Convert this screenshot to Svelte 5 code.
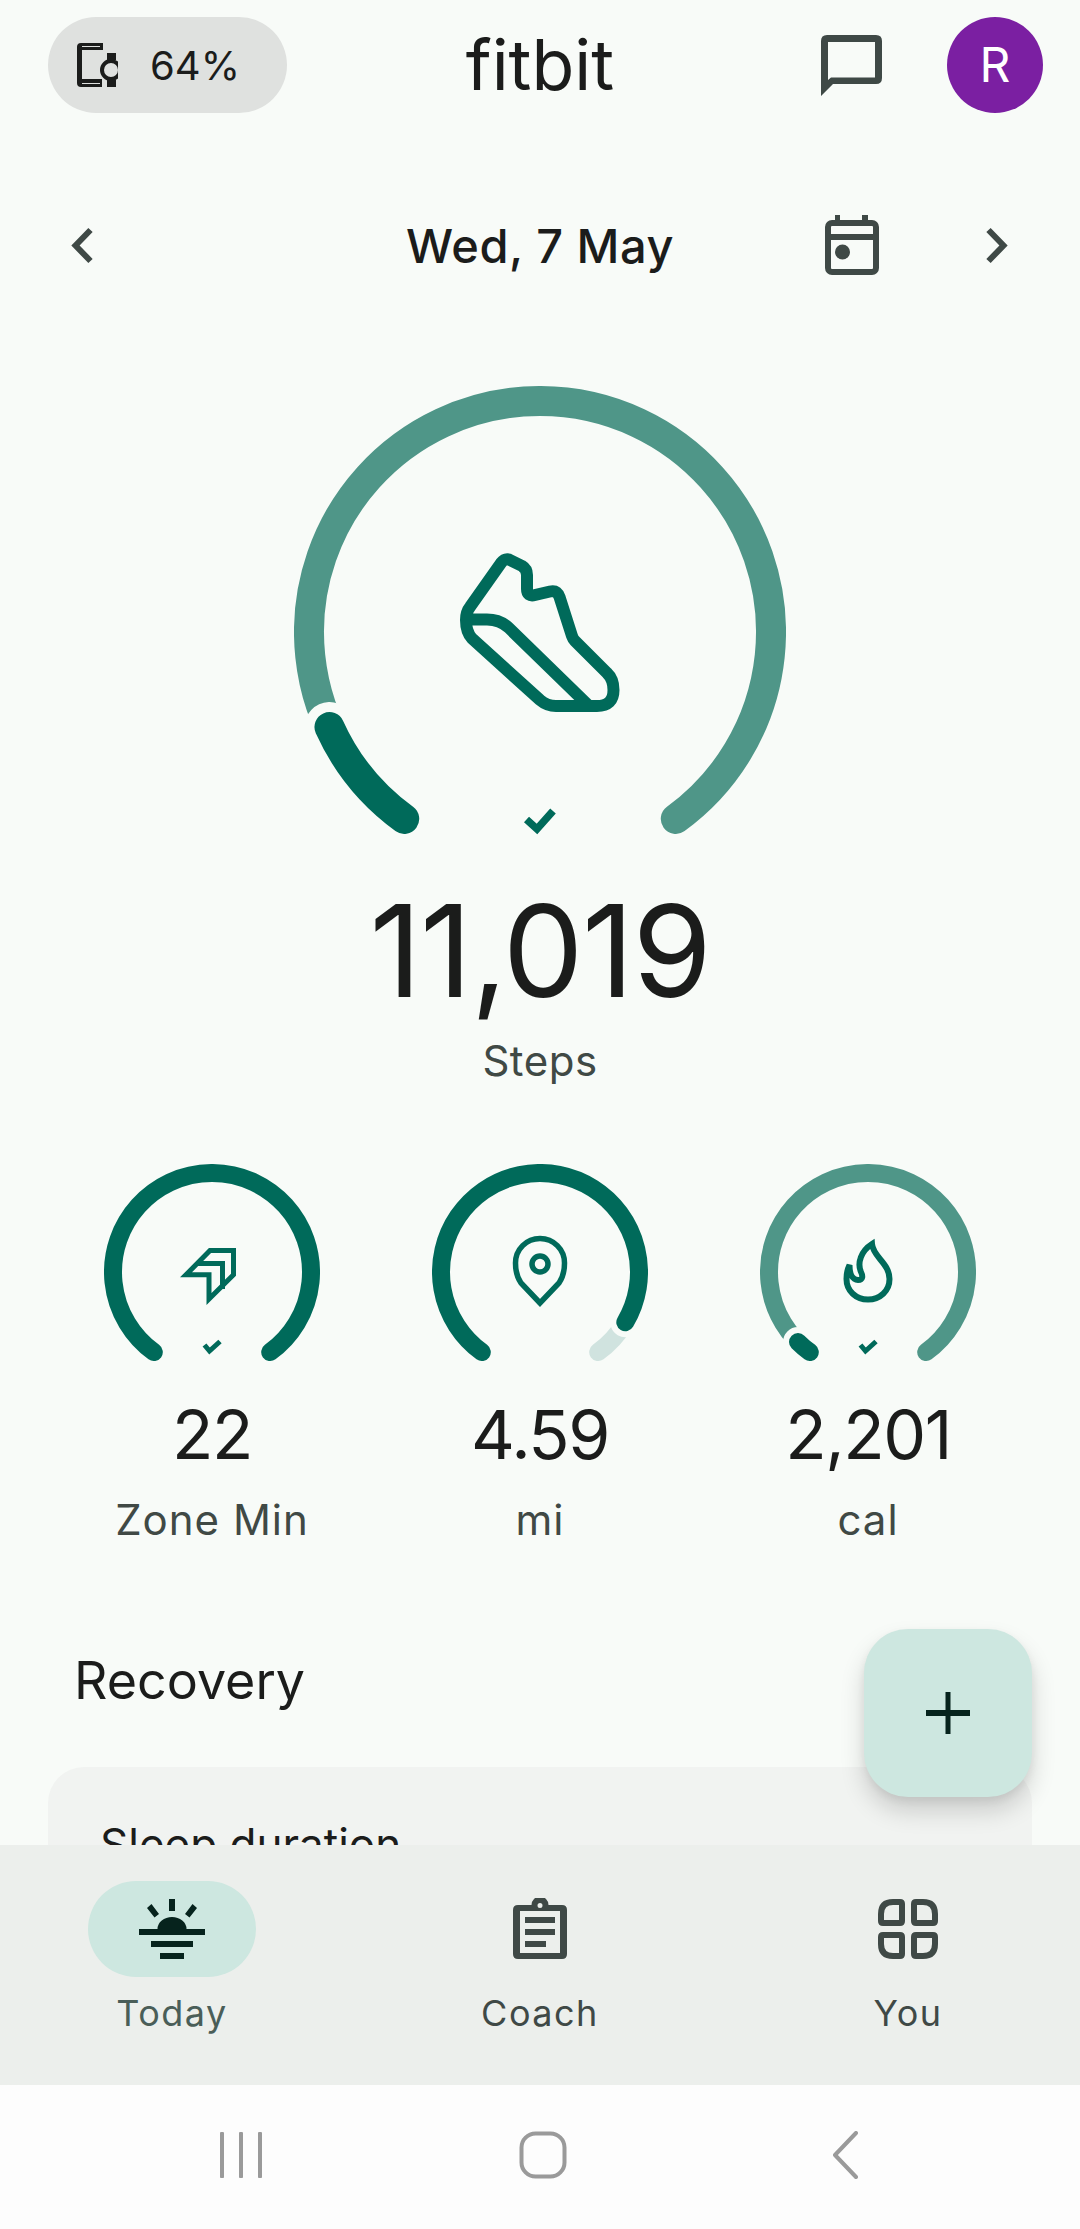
<script>
	const dark = '#006a5a';
	const light = '#4f9688';
	const pale = '#d0e3df';
	const bg = '#f8fbf8';

	// point on a ring; the angle runs clockwise from the bottom
	function arc(cx, cy, r, from, to) {
		const pt = (a) => {
			const t = (a * Math.PI) / 180;
			return `${(cx - r * Math.sin(t)).toFixed(2)} ${(cy + r * Math.cos(t)).toFixed(2)}`;
		};
		const large = to - from > 180 ? 1 : 0;
		return `M${pt(from)} A${r} ${r} 0 ${large} 1 ${pt(to)}`;
	}

	const stats = [
		{ key: 'zone', value: '22', label: 'Zone Min', cx: 212, base: dark, progress: null, done: true },
		{ key: 'pin', value: '4.59', label: 'mi', cx: 540, base: pale, progress: [36, 300.5], done: false },
		{ key: 'flame', value: '2,201', label: 'cal', cx: 868, base: light, progress: [36, 45], done: true }
	];
</script>

<div class="phone">
	<div class="content">
		<header class="topbar">
			<div class="battery">
				<svg class="device-icon" width="42" height="46" viewBox="76 42 42 46" aria-hidden="true">
					<path class="ink" fill-rule="evenodd" d="M103 43 H81 Q77 43 77 47 V83 Q77 87 81 87 H102 V79 H82 V50 H103 Z M82 46 H100 V47 H82 Z M82 83 H100 V84 H82 Z" />
					<circle class="ink-line" cx="111" cy="70" r="9" />
					<path class="ink" d="M107 53 H116 V60 H107 Z M107 80 H116 V87 H107 Z" />
				</svg>
				<span>64%</span>
			</div>
			<div class="logo">fitbit</div>
			<div class="top-actions">
				<svg width="61" height="61" viewBox="822 34 61 61" aria-hidden="true">
					<path class="grey" fill-rule="evenodd" d="M822 95 V40 Q822 34 828 34 H877 Q883 34 883 40 V77 Q883 83 877 83 H834 Z M829 79 L832 76.500 H876 V41 H829 Z" />
				</svg>
				<div class="avatar">R</div>
			</div>
		</header>

		<div class="date-row">
			<svg width="24" height="40" viewBox="71 225 24 40" aria-hidden="true">
				<path class="chev" d="M90.500 230 L75.500 245.500 L90.500 261" />
			</svg>
			<div class="date">Wed, 7 May</div>
			<div class="date-right">
				<svg width="56" height="60" viewBox="824 215 56 60" aria-hidden="true">
					<path class="grey" d="M835 215 H840 V222 H835 Z M862 215 H868 V222 H862 Z" />
					<rect class="grey-line" x="828" y="223" width="48" height="49" rx="4" />
					<path class="grey" d="M828 234 H876 V240 H828 Z" />
					<circle class="grey" cx="842.500" cy="252" r="7.500" />
				</svg>
				<svg width="24" height="40" viewBox="985 225 24 40" aria-hidden="true">
					<path class="chev" d="M988.500 230 L1003.500 245.500 L988.500 261" />
				</svg>
			</div>
		</div>

		<section class="hero">
			<svg class="hero-ring" width="492" height="450" viewBox="294 386 492 450" aria-hidden="true">
				<path d={arc(540, 632, 231, 36, 324)} fill="none" stroke={light} stroke-width="30" stroke-linecap="round" />
				<path d={arc(540, 632, 231, 36, 65.7)} fill="none" stroke={bg} stroke-width="50" stroke-linecap="round" />
				<path d={arc(540, 632, 231, 36, 65.7)} fill="none" stroke={dark} stroke-width="30" stroke-linecap="round" />
				<path class="teal-line" stroke-width="12" d="M509 559.500 L522 566 Q527 569 527 575 V589 Q527 597 535 595 L550 591.500 Q557 590 559.500 597 L572 636 Q573 639 575 641 L607 673 Q613.500 679 613.500 690 Q613.500 706 597 706 H556 Q547 706 540 700 L472 638.500 Q466 632 466 620 Q466 612 470 607 L501 563 Q504.500 558.500 509 559.500 Z M467 619.500 H487 Q500 619.500 509 628 L588 705" />
				<path class="teal-line" stroke-width="7.500" d="M526.500 819.500 L537 829 L553 811" />
			</svg>
			<div class="hero-value">11,019</div>
			<div class="hero-label">Steps</div>
		</section>

		<section class="stats">
			{#each stats as s}
				<div class="stat">
					<svg width="216" height="200" viewBox="{s.cx - 108} 1165 216 200" aria-hidden="true">
						<path d={arc(s.cx, 1273, 99, 36, 324)} fill="none" stroke={s.base} stroke-width="18" stroke-linecap="round" />
						{#if s.progress}
							<path d={arc(s.cx, 1273, 99, s.progress[0], s.progress[1])} fill="none" stroke={bg} stroke-width="30" stroke-linecap="round" />
							<path d={arc(s.cx, 1273, 99, s.progress[0], s.progress[1])} fill="none" stroke={dark} stroke-width="18" stroke-linecap="round" />
						{/if}
						{#if s.key === 'zone'}
							<path class="teal-line" stroke-width="5" d="M210 1251.500 H233.500 V1275.700 L209 1300 V1275.800 H186 Z" />
							<path class="teal-line" stroke-width="5" d="M196 1264.500 H222.500 V1290" />
						{:else if s.key === 'pin'}
							<path class="teal-line" stroke-width="5.500" d="M540 1304 L521 1284 Q515.500 1276 515.500 1264 A24.500 24.500 0 0 1 564.500 1264 Q564.500 1276 559 1284 Z" />
							<circle class="teal-line" stroke-width="5.500" cx="540" cy="1265" r="8" />
						{:else}
							<path class="teal-line" stroke-width="6" d="M872 1245 C873 1258 889.500 1264 889.500 1280 C889.500 1292 880 1300.500 868 1300.500 C856 1300.500 846.500 1292 846.500 1280 C846.500 1274 847.500 1270 849.500 1266 C849.500 1274 852 1281 858 1281 C863 1281 863 1277 861 1273 C857 1264 861 1252 872 1245 Z" />
						{/if}
						{#if s.done}
							<path class="teal-line" stroke-width="5" transform="translate({s.cx - 212} 0)" d="M204.500 1346 L209.500 1352 L220 1342.500" />
						{/if}
					</svg>
					<div class="stat-value">{s.value}</div>
					<div class="stat-label">{s.label}</div>
				</div>
			{/each}
		</section>

		<h2 class="section-title">Recovery</h2>
		<div class="card">
			<div class="card-title">Sleep duration</div>
		</div>

		<button class="fab" aria-label="Add">
			<svg width="44" height="42" viewBox="0 0 44 42" aria-hidden="true">
				<path d="M0 18 H19.500 V0 H24.500 V18 H44 V24 H24.500 V42 H19.500 V24 H0 Z" fill="#06231d" />
			</svg>
		</button>
	</div>

	<nav class="tabs">
		<div class="tab active">
			<div class="pill">
				<svg width="68" height="62" viewBox="138 1895 68 62" aria-hidden="true">
					<path fill="#06231d" d="M169 1896 H175 V1908 H169 Z M147 1905 L151.500 1901 L159 1911 L154.500 1914.500 Z M197 1905 L192.500 1901 L185 1911 L189.500 1914.500 Z M157.500 1926 A14.500 12 0 0 1 186.500 1926 Z M139 1926 H205 V1932 H139 Z M151 1938 H193 V1944 H151 Z M160 1950 H184 V1956 H160 Z" />
				</svg>
			</div>
			<span>Today</span>
		</div>
		<div class="tab">
			<div class="pill">
				<svg width="54" height="62" viewBox="513 1895 54 62" aria-hidden="true">
					<path class="grey" fill-rule="evenodd" d="M518 1902 H531.500 A8.500 8.500 0 0 1 548.500 1902 H562 Q567 1902 567 1907 V1951 Q567 1956 562 1956 H518 Q513 1956 513 1951 V1907 Q513 1902 518 1902 Z M520 1908 V1950 H560 V1908 Z M540 1900 A2.500 2.500 0 1 0 540 1905 A2.500 2.500 0 1 0 540 1900 Z" />
					<path class="grey" d="M525 1914 H555 V1920 H525 Z M525 1926 H555 V1932 H525 Z M525 1938 H546 V1944 H525 Z" />
				</svg>
			</div>
			<span>Coach</span>
		</div>
		<div class="tab">
			<div class="pill">
				<svg width="60" height="60" viewBox="0 0 60 60" aria-hidden="true">
					<path class="grid-cell" d="M15 3 H22 Q24 3 24 5 V22 Q24 24 22 24 H5 Q3 24 3 22 V15 Q3 3 15 3 Z" />
					<path class="grid-cell" transform="translate(60 0) scale(-1 1)" d="M15 3 H22 Q24 3 24 5 V22 Q24 24 22 24 H5 Q3 24 3 22 V15 Q3 3 15 3 Z" />
					<path class="grid-cell" transform="translate(0 60) scale(1 -1)" d="M15 3 H22 Q24 3 24 5 V22 Q24 24 22 24 H5 Q3 24 3 22 V15 Q3 3 15 3 Z" />
					<path class="grid-cell" transform="translate(60 60) scale(-1 -1)" d="M15 3 H22 Q24 3 24 5 V22 Q24 24 22 24 H5 Q3 24 3 22 V15 Q3 3 15 3 Z" />
				</svg>
			</div>
			<span>You</span>
		</div>
	</nav>

	<div class="system-nav">
		<svg width="42" height="46" viewBox="0 0 42 46" aria-hidden="true">
			<path class="sys" d="M2 1.500 V44.500 M21 1.500 V44.500 M40 1.500 V44.500" />
		</svg>
		<svg width="48" height="48" viewBox="0 0 48 48" aria-hidden="true">
			<rect class="sys" x="2.500" y="2.500" width="43" height="43" rx="14" />
		</svg>
		<svg width="26" height="48" viewBox="0 0 26 48" aria-hidden="true">
			<path class="sys" d="M24 2 L3 24 L24 46" />
		</svg>
	</div>
</div>

<style>
	:global(body) {
		margin: 0;
		background: #f8fbf8;
	}

	.phone {
		width: 1080px;
		height: 2229px;
		display: flex;
		flex-direction: column;
		overflow: hidden;
		background: #f8fbf8;
		color: #1b1c1b;
		font-family: Inter, 'Noto Sans', sans-serif;
	}

	svg {
		display: block;
		flex: none;
	}

	.ink {
		fill: #1b1c1b;
	}

	.ink-line {
		fill: none;
		stroke: #1b1c1b;
		stroke-width: 4;
	}

	.grey {
		fill: #3f4946;
	}

	.grey-line {
		fill: none;
		stroke: #3f4946;
		stroke-width: 6;
	}

	.chev {
		fill: none;
		stroke: #3f4946;
		stroke-width: 6;
	}

	.teal-line {
		fill: none;
		stroke: #006a5a;
	}

	.content {
		position: relative;
		flex: 1;
		min-height: 0;
		overflow: hidden;
	}

	.topbar {
		display: grid;
		grid-template-columns: 1fr auto 1fr;
		align-items: center;
		height: 96px;
		padding: 17px 37px 0;
	}

	.battery {
		display: flex;
		align-items: center;
		justify-self: start;
		box-sizing: border-box;
		width: 239px;
		height: 96px;
		margin-left: 11px;
		padding-left: 28px;
		gap: 32px;
		border-radius: 48px;
		background: #dfe1df;
		font-size: 40px;
	}

	.logo {
		font-size: 70px;
		line-height: 96px;
	}

	.top-actions {
		display: flex;
		align-items: center;
		justify-content: flex-end;
		gap: 65px;
	}

	.avatar {
		width: 96px;
		height: 96px;
		border-radius: 50%;
		background: #7b1fa2;
		color: #fff;
		font-size: 48px;
		line-height: 96px;
		text-align: center;
	}

	.date-row {
		display: grid;
		grid-template-columns: 1fr auto 1fr;
		align-items: center;
		height: 60px;
		margin-top: 102px;
		padding: 0 71px;
	}

	.date {
		font-size: 47px;
		letter-spacing: 0.5px;
		font-weight: 500;
	}

	.date-right {
		display: flex;
		align-items: center;
		justify-content: flex-end;
		gap: 105px;
	}

	.hero {
		display: flex;
		flex-direction: column;
		align-items: center;
		margin-top: 111px;
	}

	.hero-value {
		margin-top: 40px;
		font-size: 128px;
		line-height: 150px;
		letter-spacing: -1.500px;
	}

	.hero-label {
		margin-top: 11px;
		font-size: 42px;
		line-height: 48px;
		letter-spacing: 0.5px;
		color: #404945;
	}

	.stats {
		display: grid;
		grid-template-columns: repeat(3, 1fr);
		margin-top: 79px;
		padding: 0 48px;
	}

	.stat {
		display: flex;
		flex-direction: column;
		align-items: center;
	}

	.stat-value {
		margin-top: 30px;
		font-size: 68px;
		line-height: 80px;
		letter-spacing: -1.500px;
	}

	.stat-label {
		margin-top: 22px;
		font-size: 42px;
		line-height: 48px;
		letter-spacing: 1px;
		color: #404945;
	}

	.section-title {
		margin: 105px 0 0 74px;
		font-size: 52px;
		line-height: 64px;
		font-weight: 400;
	}

	.card {
		margin: 54px 48px 0;
		height: 200px;
		padding: 52px 52px;
		box-sizing: border-box;
		border-radius: 36px;
		background: #f1f3f1;
	}

	.card-title {
		font-size: 44px;
		line-height: 50px;
	}

	.fab {
		position: absolute;
		left: 864px;
		top: 1629px;
		display: flex;
		align-items: center;
		justify-content: center;
		width: 168px;
		height: 168px;
		padding: 0;
		border: 0;
		border-radius: 44px;
		background: #cde7e0;
		box-shadow: 0 14px 24px rgba(0, 0, 0, 0.16), 0 4px 8px rgba(0, 0, 0, 0.06);
	}

	.tabs {
		display: grid;
		grid-template-columns: repeat(3, 368px);
		justify-content: center;
		flex: none;
		height: 240px;
		box-sizing: border-box;
		padding-top: 36px;
		background: #ecefec;
		font-size: 36px;
		letter-spacing: 1.500px;
		color: #3f4946;
	}

	.tab {
		display: flex;
		flex-direction: column;
		align-items: center;
	}

	.tab.active {
		color: #4a5e58;
	}

	.pill {
		display: flex;
		align-items: center;
		justify-content: center;
		width: 168px;
		height: 96px;
		border-radius: 48px;
	}

	.active .pill {
		background: #cde7e0;
	}

	.tab span {
		margin-top: 14px;
		line-height: 44px;
	}

	.grid-cell {
		fill: none;
		stroke: #3f4946;
		stroke-width: 6;
	}

	.system-nav {
		display: grid;
		grid-template-columns: repeat(3, 302px);
		justify-content: center;
		justify-items: center;
		align-items: center;
		flex: none;
		height: 144px;
		box-sizing: border-box;
		padding: 0 0 4px 5px;
		background: #fdfdfd;
	}

	.sys {
		fill: none;
		stroke: #9a9a9a;
		stroke-width: 4;
		stroke-linecap: round;
		stroke-linejoin: round;
	}
</style>
